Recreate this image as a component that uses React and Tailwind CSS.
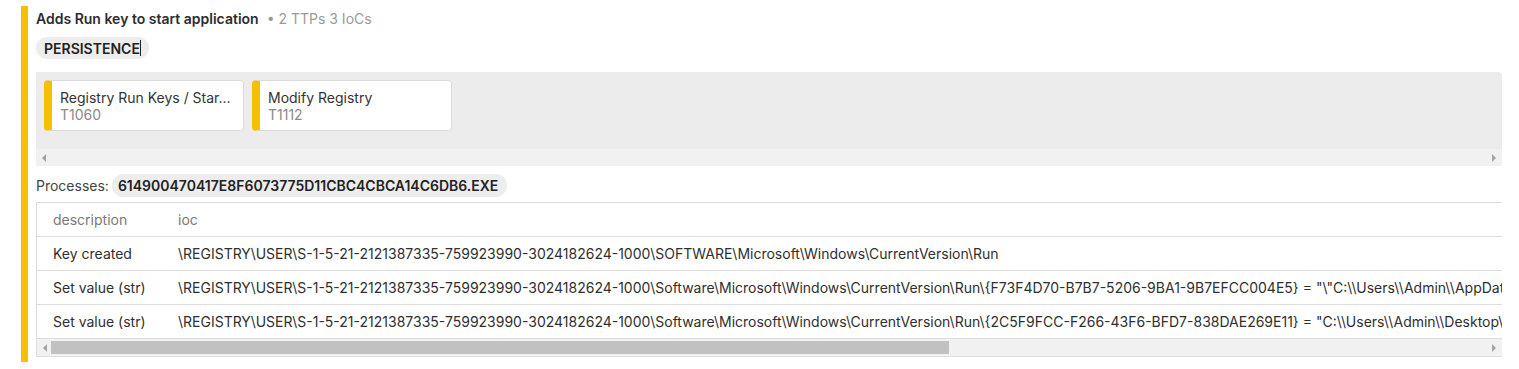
const FONT = { fontFamily: 'Inter, "Noto Sans", sans-serif' }

const TTPS = [
  { name: 'Registry Run Keys / Star...', id: 'T1060' },
  { name: 'Modify Registry', id: 'T1112' },
]

const ROWS = [
  {
    d: 'Key created',
    ioc: '\\REGISTRY\\USER\\S-1-5-21-2121387335-759923990-3024182624-1000\\SOFTWARE\\Microsoft\\Windows\\CurrentVersion\\Run',
  },
  {
    d: 'Set value (str)',
    ioc: '\\REGISTRY\\USER\\S-1-5-21-2121387335-759923990-3024182624-1000\\Software\\Microsoft\\Windows\\CurrentVersion\\Run\\{F73F4D70-B7B7-5206-9BA1-9B7EFCC004E5} = "\\"C:\\\\Users\\\\Admin\\\\AppData\\\\Roaming"',
  },
  {
    d: 'Set value (str)',
    ioc: '\\REGISTRY\\USER\\S-1-5-21-2121387335-759923990-3024182624-1000\\Software\\Microsoft\\Windows\\CurrentVersion\\Run\\{2C5F9FCC-F266-43F6-BFD7-838DAE269E11} = "C:\\\\Users\\\\Admin\\\\Desktop\\\\app.exe"',
  },
]

function Arrow({ dir }) {
  return (
    <svg width="6" height="8" viewBox="0 0 6 8" className="shrink-0">
      {dir === 'left'
        ? <path d="M5 0 L1 4 L5 8 Z" fill="#a3a3a3" />
        : <path d="M1 0 L5 4 L1 8 Z" fill="#a3a3a3" />}
    </svg>
  )
}

function FakeScrollbar({ thumb }) {
  return (
    <div className="h-[17px] bg-[#f1f1f1] flex items-center px-[5px] gap-[3px]">
      <Arrow dir="left" />
      <div className="flex-1 h-[13px] flex">
        {thumb && <div className="h-full bg-[#c1c1c1]" style={{ width: thumb }} />}
      </div>
      <Arrow dir="right" />
    </div>
  )
}

export default function App() {
  return (
    <div className="bg-white h-[369px] overflow-hidden pl-[21px] pt-[6px] pr-[17px]" style={FONT}>
      <div className="border-l-[7px] border-[#f5c000] pl-[8px] pb-[5px]">
        {/* Header */}
        <div className="flex items-baseline gap-2 pt-[3px] text-[14px] leading-[20px]">
          <span className="font-semibold text-[#2d2d2d]">Adds Run key to start application</span>
          <span className="text-[#9a9a9a]">• 2 TTPs 3 IoCs</span>
        </div>
        <div className="mt-[8px] flex">
          <span className="inline-flex items-center h-[22px] px-[8px] rounded-full bg-[#ededed] text-[14px] font-semibold text-[#222]">
            PERSISTENCE<span className="inline-block w-px h-[16px] bg-[#222]" />
          </span>
        </div>

        {/* TTP cards */}
        <div className="mt-[13px] bg-[#ececec] rounded-tr-[4px]">
          <div className="flex gap-[8px] px-[8px] pt-[8px] pb-[18px]">
            {TTPS.map(t => (
              <div key={t.id} className="w-[200px] h-[51px] bg-white rounded-[4px] border border-[#dcdcdc] border-l-[8px] border-l-[#f5c000] pl-[8px] flex flex-col justify-center text-[14px] leading-[17px]">
                <div className="text-[#333]">{t.name}</div>
                <div className="text-[#8a8a8a]">{t.id}</div>
              </div>
            ))}
          </div>
          <FakeScrollbar />
        </div>

        {/* Processes */}
        <div className="flex items-center gap-[3px] mt-[8px] text-[14px]">
          <span className="text-[#444]">Processes:</span>
          <span className="inline-flex items-center h-[23px] pl-[6px] pr-[9px] rounded-full bg-[#ededed] font-semibold text-[#222]">
            614900470417E8F6073775D11CBC4CBCA14C6DB6.EXE
          </span>
        </div>

        {/* IOC table */}
        <div className="mt-[5px] border border-[#dddddd] border-r-0 overflow-hidden">
          <div className="text-[14px] whitespace-nowrap">
            <div className="flex h-[34px] items-center border-b border-[#dddddd] text-[#7a7a7a]">
              <div className="w-[141px] pl-[16px] shrink-0">description</div>
              <div>ioc</div>
            </div>
            {ROWS.map((r, i) => (
              <div key={i} className="flex h-[34px] items-center border-b border-[#dddddd] text-[#2f2f2f]">
                <div className="w-[141px] pl-[16px] shrink-0">{r.d}</div>
                <div>{r.ioc}</div>
              </div>
            ))}
          </div>
          <FakeScrollbar thumb={898} />
        </div>
      </div>
      <div className="border-l-[7px] border-[#f5c000] h-[20px] mt-[7px]" />
    </div>
  )
}
